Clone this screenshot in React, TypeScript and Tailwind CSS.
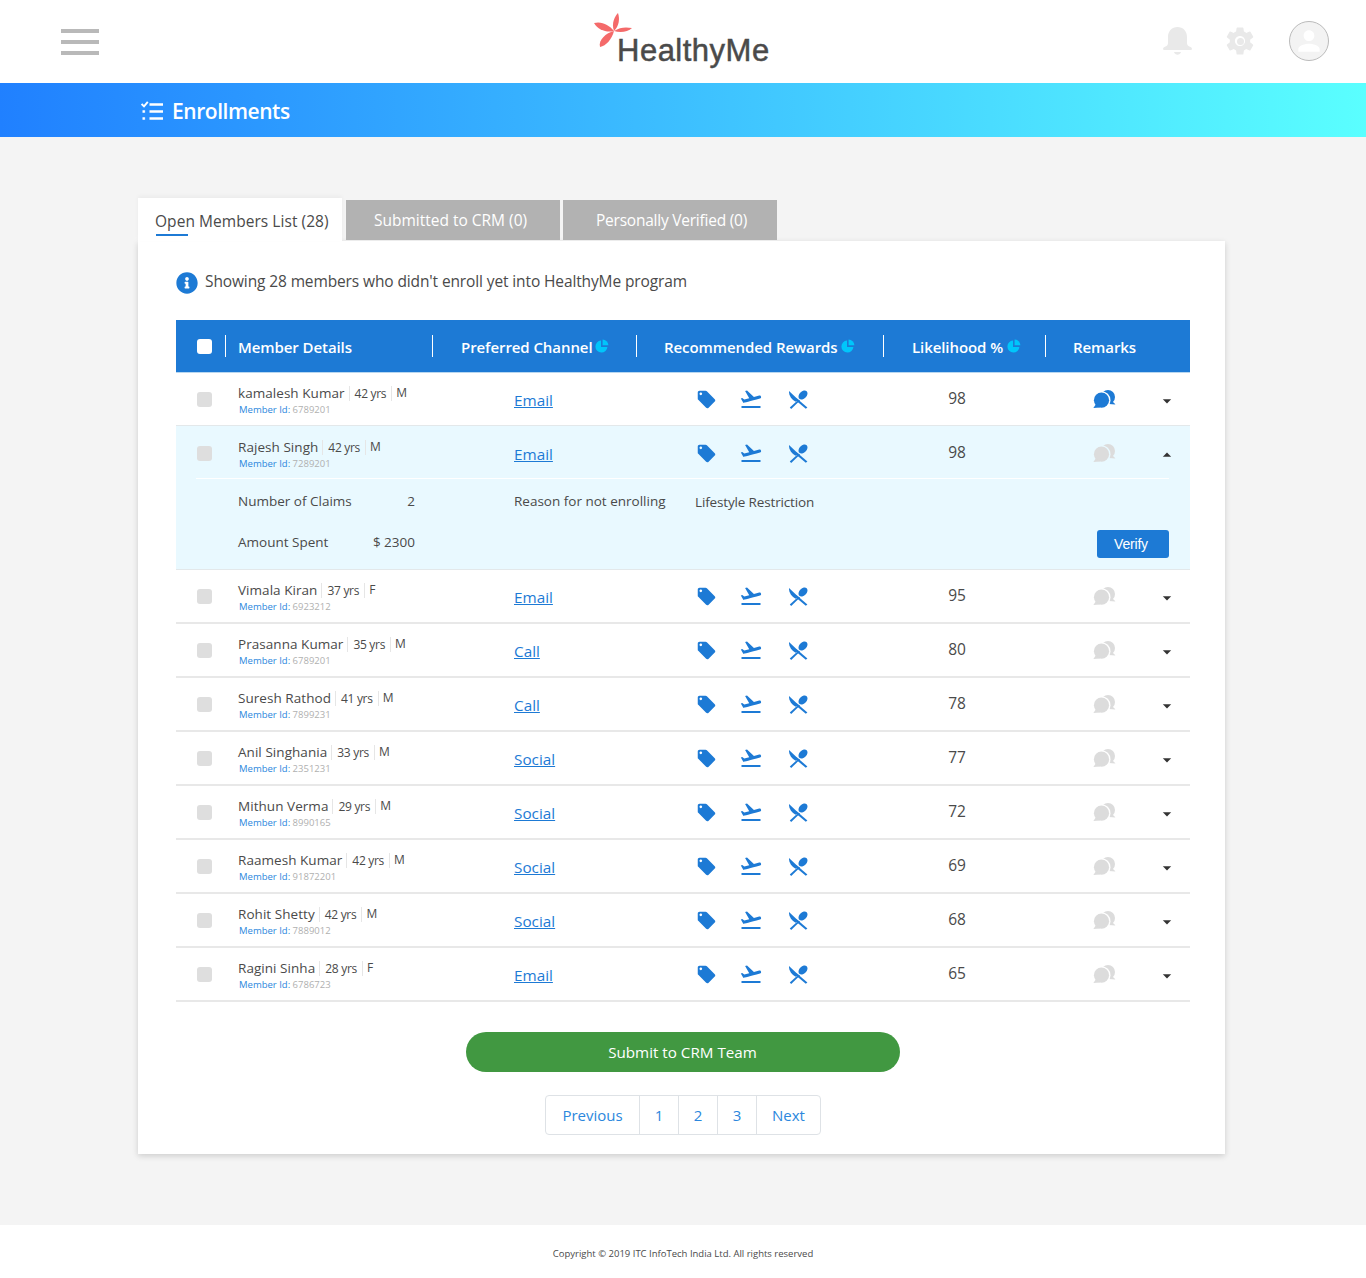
import React from "react";
import { MdLocalOffer, MdFlightTakeoff, MdSettings, MdPerson, MdArrowDropDown, MdArrowDropUp } from "react-icons/md";
import { FaInfoCircle } from "react-icons/fa";

const Pie = () => (
  <svg viewBox="0 0 14 14" className="w-[14px] h-[14px] text-[#00c6fb] shrink-0" fill="currentColor">
    <path d="M6 1.6A6 6 0 1 0 12.4 8H6Z" />
    <path d="M7.6 .6A6 6 0 0 1 13.4 6.2H7.6Z" />
  </svg>
);

const Cutlery = () => (
  <svg viewBox="0 0 20 19" className="w-[20px] h-[19px] text-[#1d7ad5]" fill="currentColor">
    <path d="M1 1 L10 9.6 L7.6 11.8 C3.5 9.5 .8 5.5 1 1Z" />
    <path d="M8.6 8.2 L19.4 17.4 L17.8 18.8 L7 9.8Z" />
    <path d="M10.6 9.4 L1.8 17.6 L3.2 18.9 L12 10.6Z" />
    <ellipse cx="15" cy="5" rx="3.6" ry="5.2" transform="rotate(45 15 5)" />
  </svg>
);

const Chat = ({ on }: { on: boolean }) => (
  <svg viewBox="0 0 23 18" className={`w-[23px] h-[18px] ${on ? "text-[#1d7ad5]" : "text-[#dcdcdc]"}`} fill="currentColor">
    <mask id="chatcut">
      <rect width="23" height="18" fill="#fff" />
      <circle cx="8.5" cy="10.2" r="9" fill="#000" />
    </mask>
    <g mask="url(#chatcut)">
      <circle cx="15" cy="7" r="7" />
      <path d="M19 11 L22.6 14.4 L16 14Z" />
    </g>
    <circle cx="8.5" cy="10.2" r="7.6" />
    <path d="M3 14 L.4 18 L7 17.4Z" />
  </svg>
);

const Petals = () => (
  <svg viewBox="0 0 40 36" className="w-[40px] h-[36px] text-[#f46a6a] shrink-0" fill="currentColor">
    <path d="M20 18C17 10 21 3 24 0C26 6 25 13 20 18Z" />
    <path d="M20 18C13 20 4 17 0 10C8 8 15 12 20 18Z" />
    <path d="M20 18C18 26 12 33 6 34C4 27 12 20 20 18Z" />
    <path d="M20 18C26 14 32 14 38 15C34 19 26 20 20 18Z" />
  </svg>
);

const Checklist = () => (
  <svg viewBox="0 0 22 19" className="w-[22px] h-[19px] text-white shrink-0" fill="none" stroke="currentColor">
    <path d="M.6 3 L3 5.4 L6.8 .8" strokeWidth="1.9" />
    <path d="M8.5 3.5H22M8.5 10.5H22M8.5 17.5H22" strokeWidth="2.6" />
    <path d="M1.5 10.5H5M1.5 17.5H5" strokeWidth="2.6" strokeDasharray="2.4 1" />
  </svg>
);

const Bell = () => (
  <svg viewBox="0 0 29 29" className="w-[29px] h-[29px] text-[#e9e9e9]" fill="currentColor">
    <path d="M14.5 0C9 0 5 4 5 10V16C5 18 4 19 1.5 20Q0 20.5 0 22Q0 23 1.5 23H27.5Q29 23 29 22Q29 20.5 27.5 20C25 19 24 18 24 16V10C24 4 20 0 14.5 0Z" />
    <path d="M11 25H18C17 28.5 12 28.5 11 25Z" />
  </svg>
);

type M = { name: string; age: string; g: string; id: string; ch: string; score: number };
const members: M[] = [
  { name: "kamalesh Kumar", age: "42", g: "M", id: "6789201", ch: "Email", score: 98 },
  { name: "Rajesh Singh", age: "42", g: "M", id: "7289201", ch: "Email", score: 98 },
  { name: "Vimala Kiran", age: "37", g: "F", id: "6923212", ch: "Email", score: 95 },
  { name: "Prasanna Kumar", age: "35", g: "M", id: "6789201", ch: "Call", score: 80 },
  { name: "Suresh Rathod", age: "41", g: "M", id: "7899231", ch: "Call", score: 78 },
  { name: "Anil Singhania", age: "33", g: "M", id: "2351231", ch: "Social", score: 77 },
  { name: "Mithun Verma", age: "29", g: "M", id: "8990165", ch: "Social", score: 72 },
  { name: "Raamesh Kumar", age: "42", g: "M", id: "91872201", ch: "Social", score: 69 },
  { name: "Rohit Shetty", age: "42", g: "M", id: "7889012", ch: "Social", score: 68 },
  { name: "Ragini Sinha", age: "28", g: "F", id: "6786723", ch: "Email", score: 65 },
];

function RowMain({ m, i, open }: { m: M; i: number; open: boolean }) {
  return (
    <div className="flex items-start h-[52px]">
      <div className="w-[62px] pl-[21px] pt-[19px] shrink-0">
        <div className="w-[15px] h-[15px] rounded-[3px] bg-[#dedede]" />
      </div>
      <div className="w-[276px] shrink-0 pt-[11px]">
        <div className="flex items-center h-[18px] text-[#4a4a4a]">
          <span className="text-[13.5px] font-medium tracking-[0.05px] pr-[4px]">{m.name}</span>
          <span className="text-[12px] tracking-[-0.3px] px-[5px] border-x border-[#e6e6e6] leading-[15px]">{m.age} yrs</span>
          <span className="text-[12px] pl-[4px]">{m.g}</span>
        </div>
        <div className="text-[9.5px] leading-[12px] mt-[2px] ml-[1px] text-[#2b87dd]">
          Member Id: <span className="text-[#b0b0b0]">{m.id}</span>
        </div>
      </div>
      <div className="w-[181px] shrink-0 pt-[15px]">
        <a className="text-[15.3px] leading-[24px] font-medium text-[#1d7ad5] underline">{m.ch}</a>
      </div>
      <div className="w-[215px] shrink-0 flex pt-[14px] pl-[1px] items-center text-[#1d7ad5]">
        <MdLocalOffer className="w-[21px] h-[21px]" />
        <MdFlightTakeoff className="w-[24px] h-[24px] ml-[22px]" />
        <div className="ml-[25px]"><Cutlery /></div>
      </div>
      <div className="w-[94px] shrink-0 pt-[14px] text-center text-[15.5px] leading-[22px] text-[#4a4a4a]">{m.score}</div>
      <div className="w-[89px] shrink-0 pt-[17px]" />
      <div className="shrink-0 pt-[17px]"><Chat on={i === 0} /></div>
      <div className="shrink-0 pl-[41px] pt-[18px] text-[#333]">
        {open ? <MdArrowDropUp className="w-[20px] h-[20px]" /> : <MdArrowDropDown className="w-[20px] h-[20px]" />}
      </div>
    </div>
  );
}

function Expanded() {
  return (
    <div className="pl-[20px] pr-[21px]">
      <div className="border-t border-white flex flex-col text-[13.5px] text-[#4a4a4a]">
        <div className="flex items-center h-[45px] pl-[42px]">
          <div className="flex w-[177px] justify-between shrink-0">
            <span className="font-medium">Number of Claims</span>
            <span>2</span>
          </div>
          <span className="ml-[99px] w-[181px] font-medium whitespace-nowrap">Reason for not enrolling</span>
          <span className="whitespace-nowrap tracking-[-0.15px] mt-[1px]">Lifestyle Restriction</span>
        </div>
        <div className="flex items-center h-[36px] pl-[42px] justify-between">
          <div className="flex w-[177px] justify-between">
            <span className="font-medium">Amount Spent</span>
            <span>$ 2300</span>
          </div>
          <button className="w-[72px] h-[28px] mt-[4px] pr-[4px] rounded-[3px] bg-[#1d7ad5] text-white text-[14px] tracking-[-0.2px] font-['Liberation_Sans',sans-serif]">Verify</button>
        </div>
      </div>
    </div>
  );
}

export default function App() {
  return (
    <div className="w-[1366px] min-h-[1278px] bg-[#f4f4f4] font-['Open_Sans',sans-serif] text-[#4a4a4a]">
      <header className="h-[83px] bg-white flex items-start pl-[61px] pr-[37px]">
        <div className="flex flex-col gap-[7.5px] w-[38px] pt-[29px] shrink-0">
          <div className="h-[3.5px] bg-[#b9b9b9]" />
          <div className="h-[3.5px] bg-[#b9b9b9]" />
          <div className="h-[3.5px] bg-[#b9b9b9]" />
        </div>
        <div className="flex items-start ml-[495px] pt-[13px]">
          <Petals />
          <span className="ml-[-17px] mt-[20px] text-[31px] tracking-[0.5px] leading-[36px] font-['Liberation_Sans',sans-serif] text-[#4a4a4a] [-webkit-text-stroke:0.5px_#4a4a4a] whitespace-nowrap">HealthyMe</span>
        </div>
        <div className="ml-auto flex items-center pt-[21px]">
          <Bell />
          <div className="relative ml-[31px] flex items-center justify-center">
            <MdSettings className="w-[34px] h-[34px] text-[#e9e9e9]" />
            <div className="absolute w-[7px] h-[7px] rounded-full bg-[#e9e9e9]" />
          </div>
          <div className="w-[40px] h-[40px] ml-[32px] rounded-full border border-[#bbbbbb] bg-[#f3f3f3] flex items-center justify-center">
            <MdPerson className="w-[32px] h-[32px] text-white" />
          </div>
        </div>
      </header>

      <div className="h-[54px] bg-[linear-gradient(88deg,#2080ff,#5affff)] flex items-center pl-[141px] gap-[9px]">
        <Checklist />
        <span className="text-[21px] font-semibold text-white tracking-[-0.45px] mt-[3px]">Enrollments</span>
      </div>

      <main className="pt-[61px] pb-[71px] pl-[138px]">
        <div className="w-[1087px]">
          <div className="flex items-end h-[43px]">
            <div className="w-[204px] h-[43px] bg-white pl-[17px] pt-[12px] shadow-[0_-2px_4px_rgba(0,0,0,0.04)]">
              <div className="text-[15.5px] leading-[22px] font-medium whitespace-nowrap tracking-[0.05px] text-[#4a4a4a]">Open Members List (28)</div>
              <div className="w-[32px] h-[2px] mt-[2px] ml-[1px] bg-[#1d7ad5]" />
            </div>
            <div className="w-[214px] h-[40px] ml-[4px] mb-[1px] pt-[2px] pr-[5px] bg-[#b2b2b2] text-white text-[15.5px] flex items-center justify-center">Submitted to CRM (0)</div>
            <div className="w-[214px] h-[40px] ml-[3px] mb-[1px] pt-[2px] pl-[3px] bg-[#b2b2b2] text-white text-[15.5px] tracking-[-0.23px] flex items-center justify-center">Personally Verified (0)</div>
          </div>

          <div className="bg-white shadow-[0_2px_6px_rgba(0,0,0,0.16)] px-[38px] pt-[31px] pb-[19px] w-[1087px]">
            <div className="flex items-center h-[23px] -mt-[1px] mb-[26px]">
              <FaInfoCircle className="w-[22px] h-[22px] text-[#1d7ad5] shrink-0" />
              <span className="ml-[7px] text-[15.5px] tracking-[-0.12px] text-[#4a4a4a] -mt-[1px] whitespace-nowrap">Showing 28 members who didn't enroll yet into HealthyMe program</span>
            </div>

            <div className="w-[1014px]">
              <div className="h-[53px] bg-[#1d7ad5] border-b border-[#b8d7f0] flex items-center text-white text-[15px] font-semibold tracking-[-0.08px] whitespace-nowrap">
                <div className="w-[50px] pl-[21px] shrink-0 h-[22px] flex items-center border-r border-white">
                  <div className="w-[15px] h-[15px] rounded-[3px] bg-white" />
                </div>
                <div className="w-[207px] pl-[12px] shrink-0 h-[22px] flex items-center border-r border-white"><span className="mt-[2px]">Member Details</span></div>
                <div className="w-[204px] pl-[28px] shrink-0 h-[22px] flex items-center gap-[2px] border-r border-white"><span className="mt-[2px]">Preferred Channel</span><Pie /></div>
                <div className="w-[247px] pl-[27px] shrink-0 h-[22px] flex items-center gap-[3px] border-r border-white"><span className="mt-[2px]">Recommended Rewards</span><Pie /></div>
                <div className="w-[162px] pl-[28px] shrink-0 h-[22px] flex items-center gap-[4px] border-r border-white"><span className="mt-[2px]">Likelihood %</span><Pie /></div>
                <div className="pl-[27px] h-[22px] flex items-center"><span className="mt-[2px]">Remarks</span></div>
              </div>

              {members.map((m, i) => (
                <div key={i} className={i === 1 ? "bg-[#e9f9ff] border-b border-[#e3e8ea] h-[144px]" : i === 0 ? "border-b border-[#e3e8ea] h-[53px]" : "border-b-2 border-[#e8e8e8] h-[54px]"}>
                  <div className={i === 1 ? "pt-[1px] -mb-[1px]" : ""}>
                    <RowMain m={m} i={i} open={i === 1} />
                  </div>
                  {i === 1 && <Expanded />}
                </div>
              ))}
            </div>

            <div className="flex justify-center mt-[30px] pl-[3px]">
              <button className="w-[434px] h-[40px] rounded-full bg-[#419841] text-white text-[15.2px] pr-[1px]">Submit to CRM Team</button>
            </div>

            <div className="flex justify-center mt-[23px] pl-[3px]">
              <div className="flex h-[40px] border border-[#dee2e6] rounded-[4px] text-[15px] text-[#2b87dd]">
                <span className="w-[94px] flex items-center justify-center border-r border-[#dee2e6]">Previous</span>
                <span className="w-[39px] flex items-center justify-center border-r border-[#dee2e6]">1</span>
                <span className="w-[39px] flex items-center justify-center border-r border-[#dee2e6]">2</span>
                <span className="w-[39px] flex items-center justify-center border-r border-[#dee2e6]">3</span>
                <span className="w-[63px] flex items-center justify-center">Next</span>
              </div>
            </div>
          </div>
        </div>
      </main>

      <footer className="h-[53px] bg-white flex items-center justify-center pt-[6px] text-[9.5px] text-[#4a4a4a]">
        Copyright © 2019 ITC InfoTech India Ltd. All rights reserved
      </footer>
    </div>
  );
}
